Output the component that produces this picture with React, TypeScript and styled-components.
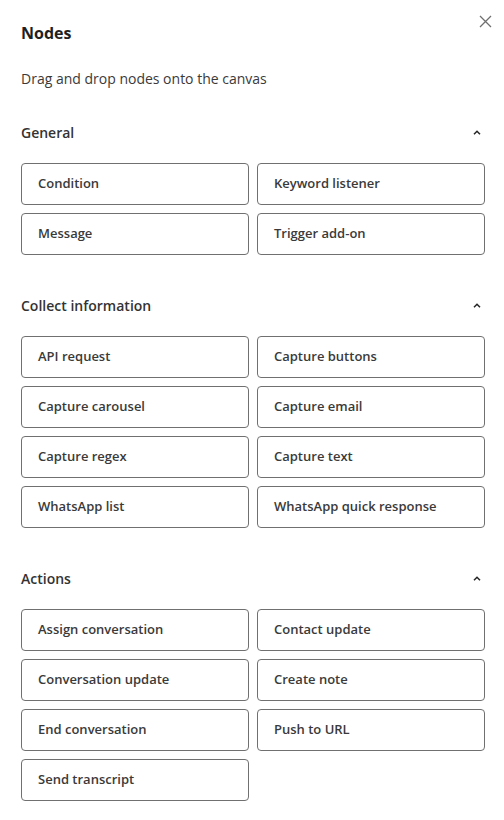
import styled, { createGlobalStyle } from "styled-components";

const sections = [
  {
    title: "General",
    nodes: ["Condition", "Keyword listener", "Message", "Trigger add-on"],
  },
  {
    title: "Collect information",
    nodes: [
      "API request",
      "Capture buttons",
      "Capture carousel",
      "Capture email",
      "Capture regex",
      "Capture text",
      "WhatsApp list",
      "WhatsApp quick response",
    ],
  },
  {
    title: "Actions",
    nodes: [
      "Assign conversation",
      "Contact update",
      "Conversation update",
      "Create note",
      "End conversation",
      "Push to URL",
      "Send transcript",
    ],
  },
];

const GlobalStyle = createGlobalStyle`
  body {
    margin: 0;
    background: #ffffff;
    font-family: "Open Sans", "Noto Sans", sans-serif;
    color: #262626;
  }
`;

const Panel = styled.aside`
  position: relative;
  width: 504px;
  box-sizing: border-box;
  padding: 21px 19px 20px 21px;
`;

const Title = styled.h2`
  margin: 0;
  font-size: 16px;
  line-height: 24px;
  font-weight: 700;
  color: #1f1f1f;
`;

const CloseButton = styled.button`
  position: absolute;
  top: 13px;
  right: 11px;
  width: 16px;
  height: 16px;
  padding: 0;
  border: none;
  background: none;
  display: flex;
  align-items: center;
  justify-content: center;
  color: #6f6f6f;
  cursor: pointer;
`;

const Subtitle = styled.p`
  margin: 24px 0 0;
  font-size: 14px;
  line-height: 20px;
  color: #3a3a3a;
`;

const Section = styled.section`
  margin-top: 33px;

  & + & {
    margin-top: 40px;
  }
`;

const SectionHeader = styled.div`
  display: flex;
  align-items: center;
  justify-content: space-between;
  height: 20px;
`;

const SectionTitle = styled.h3`
  margin: 0;
  padding-top: 1px;
  font-size: 14px;
  line-height: 20px;
  font-weight: 600;
  color: #333333;
`;

const Chevron = styled.span`
  display: flex;
  margin-right: 4px;
  color: #262626;
`;

const Grid = styled.div`
  margin-top: 21px;
  display: grid;
  grid-template-columns: 1fr 1fr;
  gap: 8px;
`;

const NodeButton = styled.div`
  box-sizing: border-box;
  height: 42px;
  display: flex;
  align-items: center;
  padding: 0 16px 2px;
  border: 1px solid #707070;
  border-radius: 4px;
  font-size: 13px;
  font-weight: 600;
  color: #3a3a3a;
  cursor: grab;
`;

export default function App() {
  return (
    <>
      <GlobalStyle />
      <Panel>
        <Title>Nodes</Title>
        <CloseButton aria-label="Close">
          <svg width="13" height="13" viewBox="0 0 13 13">
            <path d="M1 1L12 12M12 1L1 12" stroke="currentColor" strokeWidth="1.3" />
          </svg>
        </CloseButton>
        <Subtitle>Drag and drop nodes onto the canvas</Subtitle>
        {sections.map((section) => (
          <Section key={section.title}>
            <SectionHeader>
              <SectionTitle>{section.title}</SectionTitle>
              <Chevron>
                <svg width="8" height="5" viewBox="0 0 8 5">
                  <path d="M1 4.2L4 1.2L7 4.2" fill="none" stroke="currentColor" strokeWidth="1.5" />
                </svg>
              </Chevron>
            </SectionHeader>
            <Grid>
              {section.nodes.map((node) => (
                <NodeButton key={node}>{node}</NodeButton>
              ))}
            </Grid>
          </Section>
        ))}
      </Panel>
    </>
  );
}
